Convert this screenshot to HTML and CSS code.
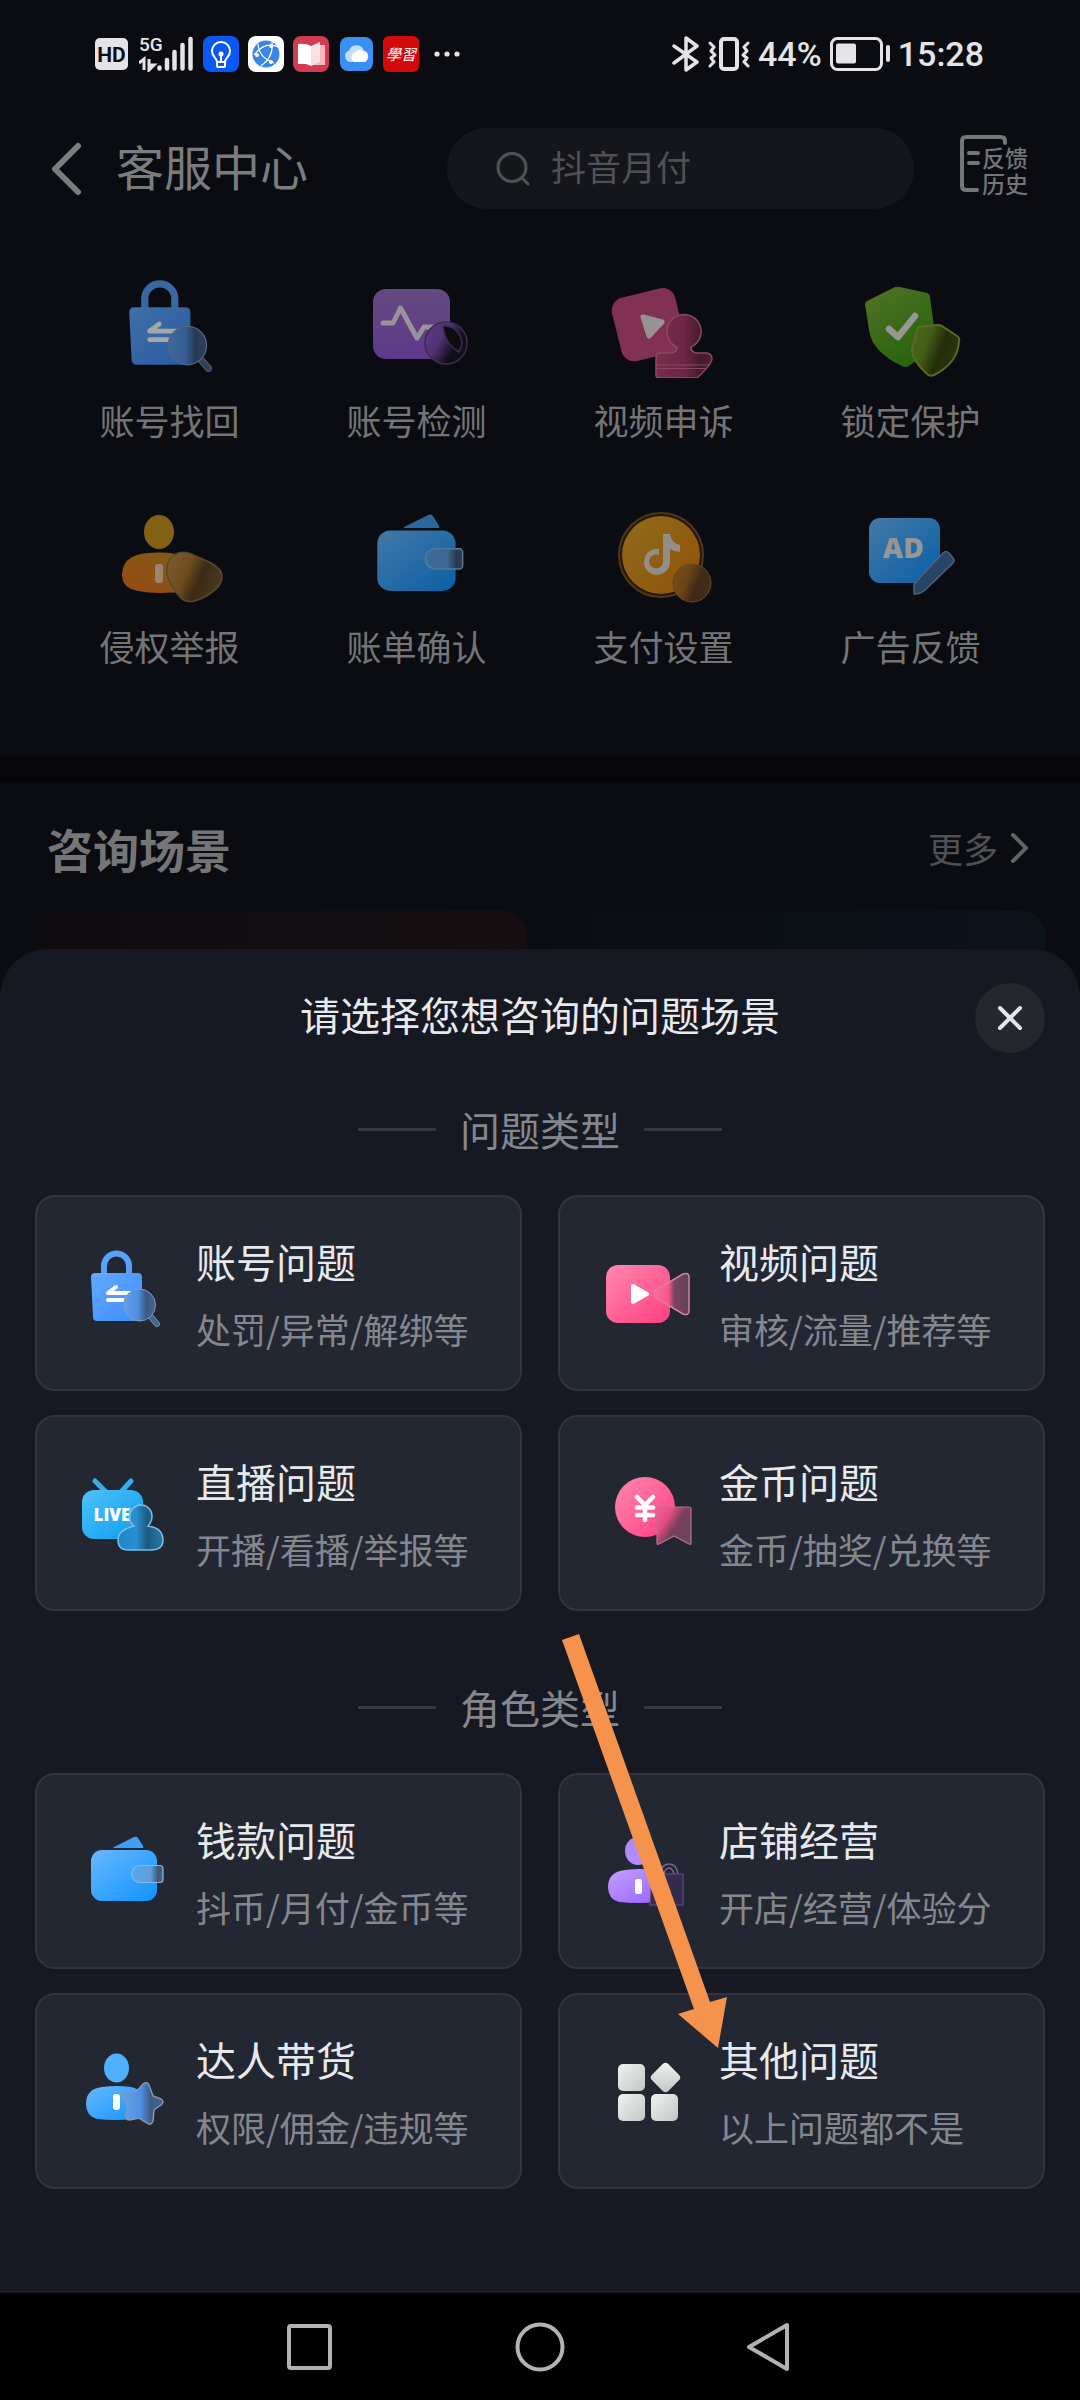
FILE: index.html
```html
<!DOCTYPE html>
<html lang="zh-CN">
<head>
    <meta charset="UTF-8">
    <meta name="viewport" content="width=device-width, initial-scale=1.0">
    <title>客服中心</title>
    <link rel="stylesheet" href="styles.css">
</head>
<body>
    <!-- Shared gradients and icons -->
    <svg class="defs" width="0" height="0" aria-hidden="true">
        <defs>
            <linearGradient id="blue" x1="0" y1="0" x2="1" y2="1"><stop offset="0" stop-color="#62aaff"/><stop offset="1" stop-color="#3f8bfb"/></linearGradient>
            <linearGradient id="sky" x1="0" y1="0" x2="1" y2="1"><stop offset="0" stop-color="#68b9ff"/><stop offset="1" stop-color="#0f93ff"/></linearGradient>
            <linearGradient id="cyan" x1="0" y1="0" x2="1" y2="1"><stop offset="0" stop-color="#4cc2fb"/><stop offset="1" stop-color="#109bea"/></linearGradient>
            <linearGradient id="pink" x1="0" y1="0" x2="1" y2="1"><stop offset="0" stop-color="#ff88b0"/><stop offset="1" stop-color="#ff3e80"/></linearGradient>
            <linearGradient id="purple" x1="0" y1="0" x2="1" y2="1"><stop offset="0" stop-color="#c3a0ff"/><stop offset="1" stop-color="#985eff"/></linearGradient>
            <linearGradient id="violet" x1="0" y1="0" x2="0" y2="1"><stop offset="0" stop-color="#9a70c4"/><stop offset="1" stop-color="#9058d8"/></linearGradient>
            <linearGradient id="green" x1="0" y1="0" x2="0.6" y2="1"><stop offset="0" stop-color="#7fb038"/><stop offset="1" stop-color="#3c9a16"/></linearGradient>
            <linearGradient id="orange" x1="0.8" y1="0" x2="0" y2="1"><stop offset="0" stop-color="#c98c22"/><stop offset="1" stop-color="#ea701c"/></linearGradient>
            <linearGradient id="gold" x1="0" y1="0" x2="1" y2="1"><stop offset="0" stop-color="#dca52b"/><stop offset="1" stop-color="#e07d0c"/></linearGradient>
            <linearGradient id="silver" x1="0" y1="0" x2="1" y2="1"><stop offset="0" stop-color="#f0f1f1"/><stop offset="1" stop-color="#c4c6c6"/></linearGradient>
            <linearGradient id="glassBlue"><stop offset="0" stop-color="#64a0ea"/><stop offset="0.45" stop-color="#4f8fe2"/><stop offset="0.7" stop-color="#3d5a82"/><stop offset="1" stop-color="#46628a"/></linearGradient>
            <linearGradient id="glassCyan"><stop offset="0" stop-color="#1f86c8"/><stop offset="0.4" stop-color="#2a8fd0"/><stop offset="0.65" stop-color="#1d5a82"/><stop offset="1" stop-color="#287ba5"/></linearGradient>
            <linearGradient id="glassPink"><stop offset="0" stop-color="#ff6a9d"/><stop offset="0.42" stop-color="#f5578e"/><stop offset="0.58" stop-color="#7a4560"/><stop offset="1" stop-color="#5f4157"/></linearGradient>
            <linearGradient id="glassStamp"><stop offset="0" stop-color="#b84474"/><stop offset="0.5" stop-color="#a83b69"/><stop offset="0.8" stop-color="#6b2745"/><stop offset="1" stop-color="#75304e"/></linearGradient>
            <linearGradient id="glassRibbon" x1="0" y1="0" x2="1" y2="0.7"><stop offset="0" stop-color="#ff5d95"/><stop offset="0.35" stop-color="#e04c80"/><stop offset="0.6" stop-color="#7a3f5c"/><stop offset="1" stop-color="#6b4560"/></linearGradient>
            <linearGradient id="glassClasp"><stop offset="0" stop-color="#53a8ef"/><stop offset="0.6" stop-color="#5f9fdb"/><stop offset="0.85" stop-color="#3c5674"/><stop offset="1" stop-color="#4e6680"/></linearGradient>
            <linearGradient id="glassGold" x1="0" y1="0" x2="1" y2="0.4"><stop offset="0" stop-color="#c48d44"/><stop offset="0.45" stop-color="#a87630"/><stop offset="0.7" stop-color="#5c4220"/><stop offset="1" stop-color="#6b5430"/></linearGradient>
            <linearGradient id="glassCoin" x1="0" y1="0" x2="1" y2="0.4"><stop offset="0" stop-color="#bd7a26"/><stop offset="0.45" stop-color="#a56a24"/><stop offset="0.75" stop-color="#5f3f22"/><stop offset="1" stop-color="#664528"/></linearGradient>
            <linearGradient id="glassGreen" x1="0" y1="0" x2="1" y2="0.4"><stop offset="0" stop-color="#6ea422"/><stop offset="0.4" stop-color="#668f22"/><stop offset="0.7" stop-color="#37450f"/><stop offset="1" stop-color="#424d17"/></linearGradient>
            <linearGradient id="glassViolet" x1="0" y1="0" x2="1" y2="0.6"><stop offset="0" stop-color="#8f59c8"/><stop offset="0.45" stop-color="#7e4fb4"/><stop offset="0.8" stop-color="#1a1526"/><stop offset="1" stop-color="#1a1526"/></linearGradient>

            <g id="icon-lock">
                <path d="M29 32V23a12.500 12.500 0 0 1 25 0v9" fill="none" stroke="#58a0f8" stroke-width="6"/>
                <path d="M20 30h43a4 4 0 0 1 4 4v40a4 4 0 0 1-4 4H22a4 4 0 0 1-4-4L16 34a4 4 0 0 1 4-4z" fill="url(#blue)"/>
                <path d="M56 50H33l8-6M33 57h18v5" fill="none" stroke="#fff" stroke-width="4" stroke-linecap="round" stroke-linejoin="round"/>
                <path d="M76 74l6 7" stroke="#6d86a8" stroke-width="6" stroke-linecap="round"/>
                <path d="M76 74l6 7" stroke="#46648c" stroke-width="4" stroke-linecap="round"/>
                <circle cx="64.500" cy="62" r="16" fill="url(#glassBlue)" stroke="#7b9cc6" stroke-width="1"/>
            </g>
            <g id="icon-wallet">
                <path d="M40 27q-3 0-1-1l20-10q3-1 4 1l5 8q1 2-1 2z" fill="#3f9ff5"/>
                <rect x="16" y="29" width="66" height="51" rx="11" fill="url(#sky)"/>
                <path d="M65 44.500h20a3 3 0 0 1 3 3v11a3 3 0 0 1-3 3H65a8.500 8.500 0 0 1 0-17z" fill="url(#glassClasp)" stroke="#84b8e6" stroke-width="1.200"/>
            </g>
        </defs>
    </svg>

    <div class="status-bar">
        <div class="status-left">
            <svg width="33" height="34" viewBox="0 0 33 34">
                <rect y="1" width="33" height="32" rx="5" fill="#e4e4e6"/>
                <text x="16.500" y="25" class="hd-text">HD</text>
            </svg>
            <svg class="signal" width="54" height="36" viewBox="0 0 54 36">
                <text x="0" y="15" class="net-text">5G</text>
                <path d="M0 27l5-4v11M10 23v11l5-5h-4" fill="none" stroke="#e4e4e6" stroke-width="3"/>
                <path d="M20.500 31.500v1M28 24v8.500M35.500 16v16.500M43.500 9v23.500M51.500 3v29.500" stroke="#e4e4e6" stroke-width="4.500" stroke-linecap="round"/>
            </svg>
            <svg width="36" height="36" viewBox="0 0 36 36">
                <rect width="36" height="36" rx="8" fill="#0a59f7"/>
                <path d="M14 26c0-4-5-5-5-11a9 9 0 0 1 18 0c0 6-5 7-5 11zM14 26v4q0 1 1 1h6q1 0 1-1v-4M18 25v-7" fill="none" stroke="#fff" stroke-width="2"/>
                <circle cx="18" cy="18" r="2.500" fill="#fff"/>
            </svg>
            <svg width="36" height="36" viewBox="0 0 36 36">
                <rect width="36" height="36" rx="8" fill="#fff"/>
                <circle cx="18" cy="18" r="13.500" fill="#3a86e6"/>
                <path d="M6 19Q17 5 30 11M10 8Q11 22 26 27M24 6Q26 21 13 30" fill="none" stroke="#fff" stroke-width="1.200"/>
                <circle cx="23" cy="10" r="2" fill="#fff"/><circle cx="9" cy="19" r="2" fill="#fff"/><circle cx="23" cy="26" r="2" fill="#fff"/>
            </svg>
            <svg width="36" height="36" viewBox="0 0 36 36">
                <rect width="36" height="36" rx="8" fill="#d23b51"/>
                <path d="M20 9h12v20H20z" fill="#f5b5bd"/>
                <path d="M18 10l9-4v20l-9 4z" fill="#fbdfe2"/>
                <path d="M5 8q8-1 13 2v20q-5-3-13-2z" fill="#fff"/>
            </svg>
            <svg class="app-cloud" width="33" height="34" viewBox="0 0 33 34">
                <rect width="33" height="34" rx="8" fill="#3a8ff5"/>
                <path d="M10 25a6 6 0 0 1-1-11.500 8 8 0 0 1 15 0A6 6 0 0 1 24 25z" fill="#c3def9"/>
                <path d="M15 25a5 5 0 0 1 0-9.500 6 6 0 0 1 9-1 5.500 5.500 0 0 1 0 10.500z" fill="#fff"/>
            </svg>
            <svg width="36" height="36" viewBox="0 0 36 36">
                <rect width="36" height="36" rx="6" fill="#d20a0a"/>
                <text x="18" y="24" class="study-text">學習</text>
            </svg>
            <svg class="dots" width="26" height="36" viewBox="0 0 26 36" fill="#e4e4e6">
                <circle cx="3" cy="18" r="2.600"/><circle cx="13" cy="18" r="2.600"/><circle cx="23" cy="18" r="2.600"/>
            </svg>
        </div>
        <div class="status-right">
            <svg width="28" height="36" viewBox="0 0 28 36" fill="none" stroke="#e4e4e6" stroke-width="3.500" stroke-linecap="round" stroke-linejoin="round">
                <path d="M2 10l23 16-11 8V2l11 8L2 27"/>
            </svg>
            <svg width="42" height="36" viewBox="0 0 42 36" fill="none" stroke="#e4e4e6" stroke-linecap="round" stroke-linejoin="round">
                <rect x="13" y="3" width="16" height="30" rx="3" stroke-width="4"/>
                <path d="M2 7l4 4-3 4 4 4-4 3 3 4-4 4M40 7l-4 4 3 4-4 4 4 3-3 4 4 4" stroke-width="3"/>
            </svg>
            <span class="status-text">44%</span>
            <svg width="60" height="34" viewBox="0 0 60 34">
                <rect x="1.500" y="1.500" width="50" height="31" rx="6" fill="none" stroke="#e4e4e6" stroke-width="3"/>
                <rect x="6" y="6.500" width="20" height="20" rx="2" fill="#e4e4e6"/>
                <rect x="56" y="8" width="4" height="17" rx="2" fill="#e4e4e6"/>
            </svg>
            <span class="status-text">15:28</span>
        </div>
    </div>

    <header class="header">
        <button class="icon-button" type="button" aria-label="返回">
            <svg width="32" height="54" viewBox="0 0 32 54"><path d="M28 4L5 27l23 23" fill="none" stroke="#7b7c7f" stroke-width="6" stroke-linecap="round" stroke-linejoin="round"/></svg>
        </button>
        <h1 class="header-title">客服中心</h1>
        <label class="search">
            <svg width="36" height="36" viewBox="0 0 36 36" fill="none" stroke="#505155" stroke-width="3" stroke-linecap="round"><circle cx="17" cy="16.500" r="14"/><path d="M27 27l6 6"/></svg>
            <input class="search-input" type="search" placeholder="抖音月付" aria-label="搜索">
        </label>
        <button class="history" type="button">
            <svg class="history-frame" width="72" height="70" viewBox="0 0 72 70">
                <path d="M47 9V7q0-4-4-4H8Q4 3 4 7v45q0 4 4 4h11M11 19h9M11 29h9" fill="none" stroke="#747578" stroke-width="4" stroke-linecap="round"/>
            </svg>
            <span>反馈</span>
            <span>历史</span>
        </button>
    </header>

    <nav class="tools">
        <a class="tool" href="#">
            <svg class="tool-icon" viewBox="5 -1 90 90"><use href="#icon-lock"/></svg>
            <span>账号找回</span>
        </a>
        <a class="tool" href="#">
            <svg class="tool-icon" viewBox="1 0 108 108">
                <rect x="11" y="19" width="77" height="70" rx="13" fill="url(#violet)"/>
                <path d="M21 53h10l7.500-15L55 68l7-11h10" fill="none" stroke="#e8e2ee" stroke-width="5" stroke-linecap="round" stroke-linejoin="round"/>
                <circle cx="84" cy="73" r="21" fill="url(#glassViolet)" stroke="#5c4279" stroke-width="1.500"/>
                <path d="M81 56a17 17 0 0 1 16 26Q83 74 81 56z" fill="#15111c" stroke="#5c4279" stroke-width="1.500"/>
            </svg>
            <span>账号检测</span>
        </a>
        <a class="tool" href="#">
            <svg class="tool-icon" viewBox="1 0 108 108">
                <rect x="7" y="22" width="65" height="65" rx="13" transform="rotate(-14 40 55)" fill="#c74c7d"/>
                <path d="M34 47l19 5-13 14z" fill="#e8e2e5" stroke="#e8e2e5" stroke-width="5" stroke-linejoin="round"/>
                <path d="M68 77a17 17 0 1 1 14 0q0 6 7 6h9q5 1 5 6-1 6-15 19H50q-3 0-3-3V87q0-4 4-4h10q7 0 7-6z" fill="url(#glassStamp)" stroke="#d66f98" stroke-width="1.500"/>
                <path d="M47 95h54M47 98.500h51" stroke="#d66f98" stroke-width="1.200"/>
            </svg>
            <span>视频申诉</span>
        </a>
        <a class="tool" href="#">
            <svg class="tool-icon" viewBox="1 0 108 108">
                <path d="M37 18q3-2 7-1l27 6q3 1 3 4l4 30q0 22-25 39-3 2-7 0Q16 82 13 60L9 34q0-2 2-3z" fill="url(#green)"/>
                <path d="M33 59l9 8 17-21" fill="none" stroke="#e8eae4" stroke-width="6.500" stroke-linecap="round" stroke-linejoin="round"/>
                <path d="M62 57l19-2q3 0 5 1l15 10q3 2 2 5-1 22-25 34-5 2-8-2-15-14-14-25z" fill="url(#glassGreen)" stroke="#8da131" stroke-width="2"/>
            </svg>
            <span>锁定保护</span>
        </a>
        <a class="tool" href="#">
            <svg class="tool-icon" viewBox="1 0 108 108">
                <ellipse cx="44" cy="36" rx="15" ry="17" fill="#c7961f"/>
                <path d="M7 79q0-20 26-22 25-2 40 5v33q-30 4-50 0Q7 92 7 79z" fill="url(#orange)"/>
                <rect x="40" y="68" width="8" height="19" rx="3" fill="#f0cba8"/>
                <path d="M59 59q8-5 17-1l20 9q11 6 11 13 0 7-5 12-10 10-23 13-8 2-13-3Q50 85 52 71q1-8 7-12z" fill="url(#glassGold)" stroke="#8c7048" stroke-width="1.500"/>
            </svg>
            <span>侵权举报</span>
        </a>
        <a class="tool" href="#">
            <svg class="tool-icon" viewBox="4 0 91 91"><use href="#icon-wallet"/></svg>
            <span>账单确认</span>
        </a>
        <a class="tool" href="#">
            <svg class="tool-icon" viewBox="1 0 108 108">
                <circle cx="52" cy="59" r="42" fill="#33240f" stroke="#7d5525" stroke-width="2"/>
                <circle cx="52" cy="59" r="39" fill="url(#gold)"/>
                <path d="M50 53v6a7 7 0 1 0 4 7V38h7q1 9 10 11v7q-5 0-10-3v13a13 13 0 1 1-11-13z" fill="#e0dcd6"/>
                <circle cx="83" cy="87" r="19" fill="url(#glassCoin)" stroke="#94703e" stroke-width="1"/>
            </svg>
            <span>支付设置</span>
        </a>
        <a class="tool" href="#">
            <svg class="tool-icon" viewBox="2 0 108 108">
                <rect x="14" y="22" width="71" height="65" rx="11" fill="url(#sky)"/>
                <text x="48.500" y="62" class="ad-text">AD</text>
                <path d="M88 57q3-3 6 0l4 5q2 2 0 5L70 94q-4 4-11 4V88z" fill="#3d6a9c" stroke="#7298c0" stroke-width="1.500"/>
            </svg>
            <span>广告反馈</span>
        </a>
    </nav>

    <section class="scenes">
        <div class="scenes-header">
            <h2 class="scenes-title">咨询场景</h2>
            <a class="more" href="#">更多
                <svg width="20" height="32" viewBox="0 0 20 32"><path d="M3 3l13 13L3 29" fill="none" stroke="#626367" stroke-width="4" stroke-linecap="round" stroke-linejoin="round"/></svg>
            </a>
        </div>
        <div class="scenes-row">
            <div class="scene scene-warm"></div>
            <div class="scene scene-cool"></div>
        </div>
    </section>

    <main class="sheet" role="dialog" aria-labelledby="sheet-title">
        <div class="sheet-header">
            <h2 class="sheet-title" id="sheet-title">请选择您想咨询的问题场景</h2>
            <button class="close" type="button" aria-label="关闭">
                <svg width="28" height="28" viewBox="0 0 28 28"><path d="M4 4l20 20M24 4L4 24" stroke="#e6e7ea" stroke-width="4" stroke-linecap="round"/></svg>
            </button>
        </div>

        <h3 class="group-title">问题类型</h3>
        <div class="cards">
            <button class="card" type="button">
                <svg class="card-icon" viewBox="0 0 100 100"><use href="#icon-lock"/></svg>
                <span class="card-text">
                    <span class="card-title">账号问题</span>
                    <span class="card-desc">处罚/异常/解绑等</span>
                </span>
            </button>
            <button class="card" type="button">
                <svg class="card-icon" viewBox="0 0 100 100">
                    <rect x="8" y="22" width="64" height="58" rx="12" fill="url(#pink)"/>
                    <path d="M35 43l14 8-14 8z" fill="#fff" stroke="#fff" stroke-width="4" stroke-linejoin="round"/>
                    <path d="M58 47l27-16q6-2 6 3v34q0 5-6 3L58 55q-4-4 0-8z" fill="url(#glassPink)" stroke="#d880a2" stroke-width="1.500"/>
                </svg>
                <span class="card-text">
                    <span class="card-title">视频问题</span>
                    <span class="card-desc">审核/流量/推荐等</span>
                </span>
            </button>
            <button class="card" type="button">
                <svg class="card-icon" viewBox="0 0 100 100">
                    <path d="M20 18l11 11M56 18L46 29" stroke="#36aef4" stroke-width="5" stroke-linecap="round"/>
                    <rect x="7" y="27" width="61" height="49" rx="12" fill="url(#cyan)"/>
                    <text x="37" y="58" class="live-text">LIVE</text>
                    <path d="M59 63q-5-4-4-10a11 11 0 0 1 22 0q0 6-4 10 15 2 15 14 0 10-12 10H53q-10 0-10-10t16-14z" fill="url(#glassCyan)" stroke="#77bfe6" stroke-width="1.500"/>
                </svg>
                <span class="card-text">
                    <span class="card-title">直播问题</span>
                    <span class="card-desc">开播/看播/举报等</span>
                </span>
            </button>
            <button class="card" type="button">
                <svg class="card-icon" viewBox="0 0 100 100">
                    <circle cx="47" cy="44" r="30" fill="url(#pink)"/>
                    <path d="M39 34l8 8 8-8M47 42v15M39 44.500h16M39 52h16" fill="none" stroke="#fff" stroke-width="4.500" stroke-linecap="round"/>
                    <path d="M61 44h30q2 0 2 2v34q0 2-2 1l-15-8-15 8q-2 1-2-1V46q0-2 2-2z" fill="url(#glassRibbon)" stroke="#b9708f" stroke-width="1.200"/>
                </svg>
                <span class="card-text">
                    <span class="card-title">金币问题</span>
                    <span class="card-desc">金币/抽奖/兑换等</span>
                </span>
            </button>
        </div>

        <h3 class="group-title">角色类型</h3>
        <div class="cards">
            <button class="card" type="button">
                <svg class="card-icon" viewBox="0 0 100 100"><use href="#icon-wallet"/></svg>
                <span class="card-text">
                    <span class="card-title">钱款问题</span>
                    <span class="card-desc">抖币/月付/金币等</span>
                </span>
            </button>
            <button class="card" type="button">
                <svg class="card-icon" viewBox="0 0 100 100">
                    <ellipse cx="40" cy="30" rx="13" ry="14" fill="#b08aff"/>
                    <path d="M10 66q0-15 17-17 16-2 30 0 14 3 14 17 0 12-12 15-20 2-38 0-11-3-11-15z" fill="url(#purple)"/>
                    <rect x="37" y="58" width="7" height="15" rx="2" fill="#fff"/>
                    <path d="M62 54q1-11 9-11t9 11M66 54q1-7 5-7t5 7" fill="none" stroke="#7c6791" stroke-width="1.500"/>
                    <path d="M54 53h30q2 0 1 2v29H52z" fill="#352c4d" stroke="#654a88" stroke-width="1.200"/>
                </svg>
                <span class="card-text">
                    <span class="card-title">店铺经营</span>
                    <span class="card-desc">开店/经营/体验分</span>
                </span>
            </button>
            <button class="card" type="button">
                <svg class="card-icon" viewBox="0 0 100 100">
                    <ellipse cx="41.500" cy="27" rx="12.500" ry="14.500" fill="#4fb0fb"/>
                    <path d="M11 63q0-15 16-17 16-2 29 0 14 3 14 17 0 12-12 15-18 2-36 0-11-3-11-15z" fill="url(#sky)"/>
                    <rect x="38" y="53" width="7" height="16" rx="3" fill="#fff"/>
                    <path d="M68 43q4-3 6 1l4 11 8 3q4 3 0 6l-7 5-1 11q-2 5-6 2l-8-5-9 2q-5 0-4-5l2-9-5-8q-2-6 4-6l9 0z" fill="url(#glassBlue)" stroke="#8198b5" stroke-width="1.500"/>
                </svg>
                <span class="card-text">
                    <span class="card-title">达人带货</span>
                    <span class="card-desc">权限/佣金/违规等</span>
                </span>
            </button>
            <button class="card" type="button">
                <svg class="card-icon" viewBox="0 0 100 100" fill="url(#silver)">
                    <rect x="20" y="23" width="27" height="27" rx="5"/>
                    <rect x="20" y="53" width="27" height="27" rx="5"/>
                    <rect x="53" y="53" width="27" height="27" rx="5"/>
                    <rect x="56" y="25" width="23" height="23" rx="4" transform="rotate(45 67.500 36.500)"/>
                </svg>
                <span class="card-text">
                    <span class="card-title">其他问题</span>
                    <span class="card-desc">以上问题都不是</span>
                </span>
            </button>
        </div>

        <!-- Arrow pointing at the last card -->
        <svg class="arrow" width="165" height="414" viewBox="0 0 165 414" aria-hidden="true">
            <path d="M0 6L17 0l131 368 17-5-9 51-40-34 16-5z" fill="#f5924b"/>
        </svg>
    </main>

    <footer class="nav-bar">
        <button class="icon-button" type="button" aria-label="最近任务">
            <svg width="50" height="50" viewBox="0 0 50 50"><rect x="5" y="4" width="41" height="42" rx="2" fill="none" stroke="#b2b2b2" stroke-width="4"/></svg>
        </button>
        <button class="icon-button" type="button" aria-label="主屏幕">
            <svg width="50" height="50" viewBox="0 0 50 50"><circle cx="25" cy="25" r="22.500" fill="none" stroke="#b2b2b2" stroke-width="4"/></svg>
        </button>
        <button class="icon-button" type="button" aria-label="返回上一页">
            <svg width="50" height="50" viewBox="0 0 50 50"><path d="M41 3v44L3 25z" fill="none" stroke="#b2b2b2" stroke-width="4" stroke-linejoin="round"/></svg>
        </button>
    </footer>
</body>
</html>
```
FILE: styles.css
```css
* {
    box-sizing: border-box;
}

body {
    margin: 0;
    min-height: 100vh;
    display: flex;
    flex-direction: column;
    background-color: #0b0c11;
    color: #757578;
    font-family: "Noto Sans CJK SC", sans-serif;
    font-size: 35px;
    line-height: 48px;
}

h1, h2, h3 {
    margin: 0;
    font-weight: 400;
}

button {
    border: none;
    padding: 0;
    background: none;
    color: inherit;
    font: inherit;
    cursor: pointer;
}

a {
    color: inherit;
    text-decoration: none;
}

svg {
    display: block;
    flex-shrink: 0;
}

.defs {
    position: absolute;
}

/* Status bar */
.status-bar {
    display: flex;
    align-items: center;
    justify-content: space-between;
    height: 108px;
    padding: 0 96px 0 95px;
}

.status-left,
.status-right {
    display: flex;
    align-items: center;
    gap: 9px;
}

.status-right {
    gap: 8px;
}

.signal {
    margin: 0 1px 0 2px;
}

.app-cloud {
    margin: 0 1px 0 2px;
}

.dots {
    margin-left: 6px;
}

.status-text {
    font-family: Roboto, sans-serif;
    font-size: 34px;
    font-weight: 500;
    color: #e4e4e6;
}

.hd-text,
.net-text {
    font-family: Roboto, sans-serif;
    font-weight: 700;
}

.hd-text {
    font-size: 21px;
    text-anchor: middle;
    fill: #0b0c11;
}

.net-text {
    font-size: 19px;
    font-weight: 500;
    fill: #e4e4e6;
}

.study-text {
    font-family: "Noto Sans CJK TC", sans-serif;
    font-size: 15px;
    font-style: italic;
    text-anchor: middle;
    fill: #fff;
}

/* Page header */
.header {
    display: flex;
    align-items: center;
    padding: 20px 50px 0;
}

.header-title {
    margin-left: 34px;
    padding-bottom: 8px;
    flex: 1;
    font-size: 48px;
    line-height: 64px;
    color: #7b7c7f;
}

.search {
    display: flex;
    align-items: center;
    gap: 20px;
    width: 467px;
    height: 81px;
    margin-right: 44px;
    padding: 0 48px;
    border-radius: 40px;
    background-color: #15161b;
}

.search-input {
    flex: 1;
    min-width: 0;
    border: none;
    outline: none;
    padding: 0 0 6px;
    background: none;
    color: #505155;
    font: inherit;
}

.search-input::placeholder {
    color: #505155;
}

.history {
    position: relative;
    display: flex;
    flex-direction: column;
    align-items: flex-end;
    width: 72px;
    height: 70px;
    padding: 10px 2px 0 0;
    font-size: 23px;
    font-weight: 500;
    line-height: 26px;
    color: #747578;
}

.history-frame {
    position: absolute;
    top: 0;
    left: 0;
}

/* Tool grid */
.tools {
    display: grid;
    grid-template-columns: repeat(4, 1fr);
    row-gap: 52px;
    padding: 61px 46px 86px;
}

.tool {
    display: flex;
    flex-direction: column;
    align-items: center;
    gap: 18px;
}

.tool-icon {
    width: 108px;
    height: 108px;
    filter: brightness(0.65);
}

.ad-text {
    font-family: "Open Sans", sans-serif;
    font-size: 28px;
    font-weight: 800;
    text-anchor: middle;
    fill: #e4e6e8;
}

/* Scenes behind the sheet */
.scenes {
    border-top: 26px solid #06060b;
    padding: 36px 35px 0;
}

.scenes-header {
    display: flex;
    align-items: center;
    justify-content: space-between;
    padding: 0 15px 0 12px;
}

.scenes-title {
    font-size: 46px;
    font-weight: 700;
    line-height: 60px;
}

.more {
    display: flex;
    align-items: center;
    gap: 12px;
    color: #505155;
}

.scenes-row {
    display: flex;
    gap: 26px;
    margin-top: 33px;
}

.scene {
    flex: 1;
    height: 86px;
    border-radius: 24px 24px 0 0;
}

.scene-warm {
    background: linear-gradient(90deg, #0e0c11, #160f12);
}

.scene-cool {
    background: linear-gradient(90deg, #0b0d12, #0c131b);
}

/* Bottom sheet */
.sheet {
    position: relative;
    flex: 1;
    margin-top: -48px;
    padding: 34px 35px 104px;
    border-radius: 48px 48px 0 0;
    background-color: #161822;
}

.sheet-header {
    display: flex;
    align-items: center;
    padding-left: 70px;
    margin-bottom: 48px;
}

.sheet-title {
    flex: 1;
    padding-bottom: 8px;
    text-align: center;
    font-size: 40px;
    line-height: 56px;
    color: #e8e9ed;
}

.close {
    display: flex;
    align-items: center;
    justify-content: center;
    width: 70px;
    height: 70px;
    border-radius: 50%;
    background-color: #25272f;
}

.group-title {
    display: flex;
    align-items: center;
    justify-content: center;
    gap: 24px;
    font-size: 40px;
    line-height: 56px;
    color: #85878e;
}

.group-title::before,
.group-title::after {
    content: '';
    width: 78px;
    height: 3px;
    background-color: #363842;
}

.cards {
    display: grid;
    grid-template-columns: 1fr 1fr;
    gap: 24px 36px;
    margin-top: 38px;
}

.cards + .group-title {
    margin-top: 68px;
}

.card {
    display: flex;
    align-items: center;
    gap: 21px;
    height: 196px;
    padding: 0 38px;
    border: 2px solid #31343f;
    border-radius: 20px;
    background-color: #232732;
    text-align: left;
}

.card-icon {
    width: 100px;
    height: 100px;
}

.card-text {
    display: flex;
    flex-direction: column;
    gap: 16px;
}

.card-title {
    font-size: 40px;
    line-height: 56px;
    color: #e8e9ed;
}

.card-desc {
    color: #85878e;
    white-space: nowrap;
}

.live-text {
    font-family: "Open Sans", sans-serif;
    font-size: 17px;
    font-weight: 800;
    text-anchor: middle;
    fill: #fff;
}

.arrow {
    position: absolute;
    top: 685px;
    left: 52%;
}

/* System navigation */
.nav-bar {
    display: flex;
    align-items: center;
    justify-content: center;
    gap: 181px;
    height: 108px;
    background-color: #000;
}
```
